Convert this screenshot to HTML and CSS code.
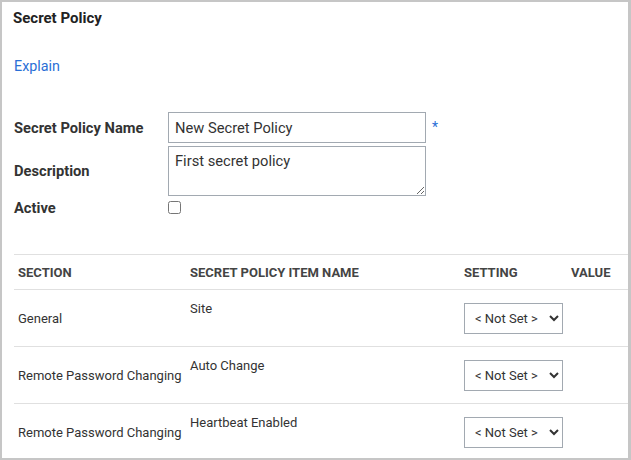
FILE: index.html
```html
<!DOCTYPE html>
<html>
<head>
<meta charset="utf-8">
<link rel="stylesheet" href="styles.css">
</head>
<body>
<div class="frame">
  <h1 class="title">Secret Policy</h1>
  <a class="explain" href="#">Explain</a>
  <div class="form">
    <label class="label">Secret Policy Name</label>
    <div class="field"><input class="input" type="text" value="New Secret Policy"><span class="req">*</span></div>
    <label class="label">Description</label>
    <div class="field"><textarea class="textarea">First secret policy</textarea></div>
    <label class="label">Active</label>
    <div class="field"><input class="check" type="checkbox"></div>
  </div>
  <table class="grid">
    <colgroup><col class="c1"><col class="c2"><col class="c3"><col class="c4"></colgroup>
    <thead>
      <tr><th>Section</th><th>Secret Policy Item Name</th><th>Setting</th><th>Value</th></tr>
    </thead>
    <tbody>
      <tr><td>General</td><td class="top">Site</td><td><select class="sel"><option>&lt; Not Set &gt;</option></select></td><td></td></tr>
      <tr><td>Remote Password Changing</td><td class="top">Auto Change</td><td><select class="sel"><option>&lt; Not Set &gt;</option></select></td><td></td></tr>
      <tr><td>Remote Password Changing</td><td class="top">Heartbeat Enabled</td><td><select class="sel"><option>&lt; Not Set &gt;</option></select></td><td></td></tr>
    </tbody>
  </table>
</div>
</body>
</html>
```
FILE: styles.css
```css
html, body { margin: 0; padding: 0; background: #fff; }
body { font-family: Roboto, "Liberation Sans", sans-serif; color: #333; }
.frame {
  width: 631px; height: 460px; box-sizing: border-box;
  border: 2px solid #c6c6c6; border-right-width: 3px;
  padding: 6px 0 0 12px; overflow: hidden;
}
.title { margin: 0 0 0 -1px; font-size: 15px; line-height: 20px; font-weight: 700; color: #222; }
.explain { display: block; margin-top: 28px; font-size: 14.3px; line-height: 20px; color: #2a6fd6; text-decoration: none; width: max-content; }
.form { display: grid; grid-template-columns: 154px auto; row-gap: 3px; margin-top: 36px; }
.label { font-size: 14.7px; font-weight: 700; color: #333; display: flex; align-items: center; }
.field { display: flex; align-items: center; }
.input, .textarea {
  box-sizing: border-box; width: 258px; border: 1px solid #a2a9b1; border-radius: 0;
  font-family: Roboto, "Liberation Sans", sans-serif; font-size: 14.7px; color: #333;
  padding: 0 6px; margin: 0;
}
.input { height: 31px; }
.textarea { height: 50px; padding-top: 5px; resize: vertical; display: block; }
.req { color: #2a6fd6; font-size: 14px; margin-left: 6px; align-self: flex-start; margin-top: 7px; }
.check { width: 13px; height: 13px; margin: 2px 0 3px 0; }
.grid { margin-top: 37px; width: 614px; border-collapse: collapse; table-layout: fixed; }
.c1 { width: 172px; } .c2 { width: 274px; } .c3 { width: 107px; } .c4 { width: 61px; }
.grid th, .grid td { text-align: left; padding: 0 4px; }
.grid thead tr { border-top: 1px solid #e0e0e0; }
.grid th { font-size: 13px; font-weight: 700; text-transform: uppercase; color: #444; height: 34px; }
.grid tr { border-bottom: 1px solid #e0e0e0; }
.grid tbody tr:last-child { border-bottom: none; }
.grid td { padding-top: 13px; padding-bottom: 12px; vertical-align: middle; color: #333; font-size: 13px; line-height: 15px; }
.grid td.top { vertical-align: top; padding-top: 11px; }
.sel {
  width: 99px; height: 31px; border: 1px solid #a2a9b1; border-radius: 0; background: #fff;
  font-family: Roboto, "Liberation Sans", sans-serif; font-size: 13px; color: #333; padding: 0 4px 0 6px;
  display: block;
}
```
